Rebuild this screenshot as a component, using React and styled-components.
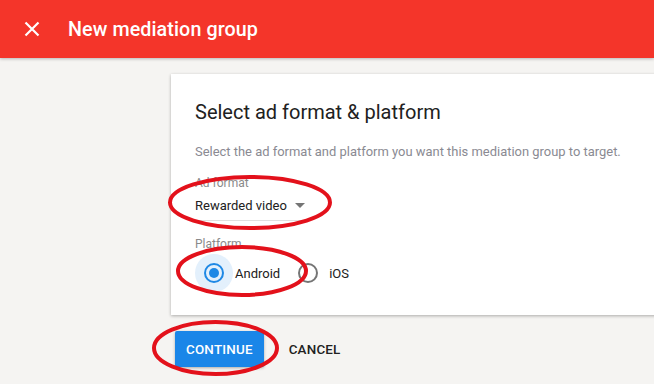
import React from 'react';
import styled, { createGlobalStyle } from 'styled-components';

const GlobalStyle = createGlobalStyle`
    body{
        margin:0;
        background:#f5f4f2;
        font-family:Roboto, "Liberation Sans", sans-serif;
    }
`;

const Page = styled.div`
    position:relative;
    width:654px;
    height:384px;
    overflow:hidden;
`;

const Header = styled.header`
    height:58px;
    background:#f4352a;
    display:flex;
    align-items:center;
    padding-left:22px;
    box-shadow:0 1px 3px rgba(0,0,0,0.25);
    color:#fff;
`;

const CloseButton = styled.div`
    width:20px;
    height:20px;
    display:flex;
    align-items:center;
    justify-content:center;
    margin-right:26px;
`;

const HeaderTitle = styled.h1`
    margin:0;
    font-size:19.7px;
    font-weight:500;
    letter-spacing:0.1px;
`;

const Main = styled.div`
    padding-left:171px;
`;

const Card = styled.div`
    margin-top:16px;
    width:520px;
    height:241px;
    box-sizing:border-box;
    background:#fff;
    box-shadow:0 1px 3px rgba(0,0,0,0.3);
    padding:24px 24px 0;
`;

const CardTitle = styled.h2`
    margin:0;
    font-size:20px;
    font-weight:400;
    color:#212121;
    line-height:28px;
`;

const Description = styled.p`
    margin:18px 0 0;
    font-size:12.95px;
    color:#8a8a92;
    line-height:16px;
    white-space:nowrap;
`;

const Label = styled.div`
    font-size:12px;
    color:#8a8a8a;
    line-height:14px;
    margin-top:${p => p.$top}px;
`;

const Select = styled.div`
    display:flex;
    align-items:center;
    gap:8px;
    width:110px;
    height:30px;
    border-bottom:1px solid #e0e0e0;
    font-size:13px;
    color:#212121;
    white-space:nowrap;
`;

const Caret = styled.span`
    width:0;
    height:0;
    border-left:5px solid transparent;
    border-right:5px solid transparent;
    border-top:5px solid #757575;
`;

const RadioRow = styled.div`
    display:flex;
    align-items:center;
    margin-top:3px;
`;

const RadioOption = styled.label`
    display:flex;
    align-items:center;
    font-size:13px;
    color:#212121;
    margin-right:9px;
`;

const Halo = styled.span`
    width:38px;
    height:38px;
    border-radius:50%;
    background:${p => (p.$active ? '#e3f0fc' : 'transparent')};
    display:flex;
    align-items:center;
    justify-content:center;
    margin-right:2px;
`;

const RadioCircle = styled.span`
    width:16px;
    height:16px;
    border-radius:50%;
    border:2px solid ${p => (p.$active ? '#1e88e5' : '#757575')};
    display:flex;
    align-items:center;
    justify-content:center;

    &::after{
        content:'';
        width:10px;
        height:10px;
        border-radius:50%;
        background:${p => (p.$active ? '#1e88e5' : 'transparent')};
    }
`;

const Actions = styled.div`
    display:flex;
    align-items:center;
    gap:25px;
    margin-top:16px;
    margin-left:4px;
`;

const Button = styled.button`
    height:36px;
    padding:0 ${p => (p.$primary ? 11 : 0)}px;
    border:none;
    border-radius:2px;
    background:${p => (p.$primary ? '#1a86e8' : 'transparent')};
    color:${p => (p.$primary ? '#fff' : '#212121')};
    box-shadow:${p => (p.$primary ? '0 1px 3px rgba(0,0,0,0.3)' : 'none')};
    font-family:Roboto, "Liberation Sans", sans-serif;
    font-size:13.4px;
    font-weight:500;
    letter-spacing:0.2px;
`;

const Annotations = styled.svg`
    position:absolute;
    top:0;
    left:0;
    pointer-events:none;
`;

function App() {
    return (
        <Page>
            <GlobalStyle />
            <Header>
                <CloseButton>
                    <svg width="16" height="16" viewBox="0 0 16 16">
                        <path d="M1.5 1.5 L14.5 14.5 M14.5 1.5 L1.5 14.5" stroke="#fff" strokeWidth="2.2" />
                    </svg>
                </CloseButton>
                <HeaderTitle>New mediation group</HeaderTitle>
            </Header>
            <Main>
                <Card>
                    <CardTitle>Select ad format &amp; platform</CardTitle>
                    <Description>Select the ad format and platform you want this mediation group to target.</Description>
                    <Label $top={16}>Ad format</Label>
                    <Select>
                        Rewarded video
                        <Caret />
                    </Select>
                    <Label $top={16}>Platform</Label>
                    <RadioRow>
                        <RadioOption>
                            <Halo $active><RadioCircle $active /></Halo>
                            Android
                        </RadioOption>
                        <RadioOption>
                            <Halo><RadioCircle /></Halo>
                            iOS
                        </RadioOption>
                    </RadioRow>
                </Card>
                <Actions>
                    <Button $primary>CONTINUE</Button>
                    <Button>CANCEL</Button>
                </Actions>
            </Main>
            <Annotations width="654" height="384">
                <g fill="none" stroke="#e3111b" strokeWidth="4">
                    <ellipse cx="250" cy="202.5" rx="80" ry="25.5" />
                    <ellipse cx="242" cy="271" rx="64" ry="24" />
                    <ellipse cx="215.5" cy="348" rx="61.5" ry="26" />
                </g>
            </Annotations>
        </Page>
    );
}

export default App;
